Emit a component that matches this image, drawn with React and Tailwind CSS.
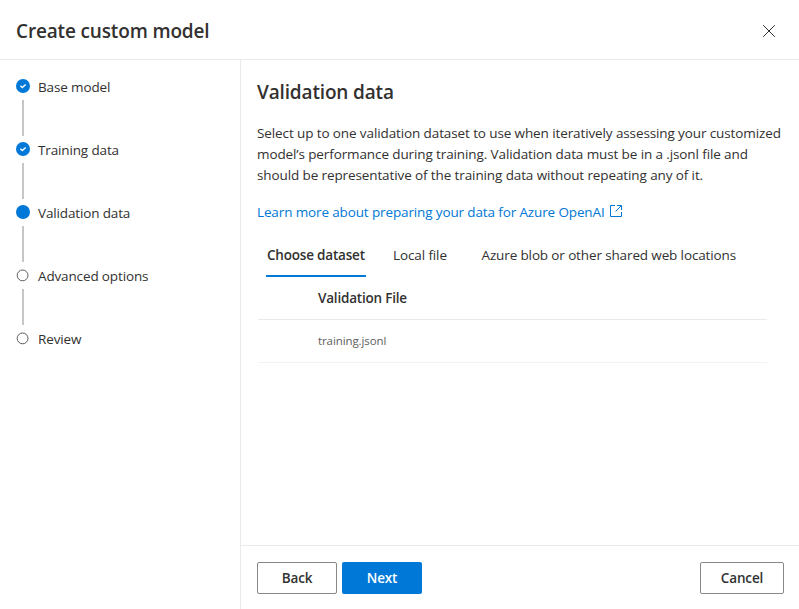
import React from "react";

const steps = [
  { label: "Base model", state: "done" },
  { label: "Training data", state: "done" },
  { label: "Validation data", state: "current" },
  { label: "Advanced options", state: "todo" },
  { label: "Review", state: "todo" },
];

function StepIcon({ state }) {
  if (state === "todo") {
    return (
      <svg className="h-[14px] w-[14px]" viewBox="0 0 14 14" fill="none">
        <circle cx="6.6" cy="7.4" r="5.4" stroke="#5c5b5a" strokeWidth="1" />
      </svg>
    );
  }
  return (
    <svg className="h-[14px] w-[14px]" viewBox="0 0 14 14" fill="none">
      <circle cx="7" cy="7" r="7" fill="#0078d7" />
      {state === "done" && (
        <path d="M4.4 6.8 6.3 8.6 9.7 5.4" stroke="#fff" strokeWidth="1.4" />
      )}
    </svg>
  );
}

function Step({ label, state, last }) {
  return (
    <li className="h-[63px]">
      <div className="flex h-[14px] items-center gap-2">
        <StepIcon state={state} />
        <span className="pt-px text-[13.5px] leading-[20px] tracking-[-0.14px] whitespace-nowrap">{label}</span>
      </div>
      {!last && <div className="mt-[7px] ml-[6px] h-9 w-0.5 bg-[#c8c6c4]" />}
    </li>
  );
}

export default function App() {
  return (
    <div className="flex h-[609px] w-[799px] flex-col overflow-hidden bg-white font-['Open_Sans','Noto_Sans',sans-serif] text-[#323130]">
      <header className="flex h-[60px] shrink-0 items-center justify-between border-b border-[#eaeaea] pr-6 pl-4">
        <h1 className="pt-0.5 text-[19px] leading-7 font-semibold tracking-[-0.15px]">Create custom model</h1>
        <button aria-label="Close" className="mt-[3px]">
          <svg className="h-3 w-3" viewBox="0 0 12 12" fill="none" stroke="#323130" strokeWidth="1">
            <path d="M.2.2l11.6 11.6M11.8.2.2 11.8" />
          </svg>
        </button>
      </header>
      <div className="flex min-h-0 flex-1">
        <ol className="w-[241px] shrink-0 border-r border-[#eaeaea] pt-[19px] pl-4">
          {steps.map((s, i) => (
            <Step key={s.label} label={s.label} state={s.state} last={i === steps.length - 1} />
          ))}
        </ol>
        <main className="flex min-w-0 flex-1 flex-col">
          <section className="flex-1 pt-[18px] pl-4">
            <h2 className="text-[19px] leading-7 font-semibold tracking-[-0.15px]">Validation data</h2>
            <p className="mt-[17px] text-[13.5px] leading-[21px] tracking-[-0.11px] whitespace-nowrap">
              Select up to one validation dataset to use when iteratively assessing your customized
              <br />
              model’s performance during training. Validation data must be in a .jsonl file and
              <br />
              should be representative of the training data without repeating any of it.
            </p>
            <a className="mt-4 flex h-[21px] items-center gap-[5px] text-[13.5px] tracking-[-0.13px] whitespace-nowrap text-[#0078d4]">
              <span>Learn more about preparing your data for Azure OpenAI</span>
              <svg className="mb-[3px] h-3 w-3" viewBox="0 0 12 12" fill="none" stroke="#0078d4">
                <path d="M5 .5H.5v11h11V7M7 .5h4.5V5M11.2.8 5.5 6.5" />
              </svg>
            </a>
            <nav className="mt-[10px] flex h-[44px] text-[13.5px] leading-[44px] whitespace-nowrap">
              <div className="ml-[9px] h-[44px] w-[100px] border-b-2 border-[#0078d4] pl-px leading-[44px] font-semibold tracking-[-0.2px]">Choose dataset</div>
              <div className="ml-[27px] w-[88.5px] tracking-[-0.11px]">Local file</div>
              <div className="tracking-[-0.13px]">Azure blob or other shared web locations</div>
            </nav>
            <div className="w-[510px] pl-px">
              <div className="h-[43px] border-b border-[#eaeaea] pl-[60px] text-[13.5px] leading-[42px] font-semibold tracking-[-0.2px]">Validation File</div>
              <div className="h-[43px] border-b border-[#f3f2f1] pl-[60px] text-[11.5px] leading-[42px] tracking-[-0.1px] text-[#605e5c]">training.jsonl</div>
            </div>
          </section>
          <footer className="flex h-[64px] shrink-0 gap-[5px] border-t border-[#eaeaea] pt-4 pr-[15px] pl-4 text-[13.5px] font-semibold tracking-[-0.15px]">
            <button className="h-8 w-20 rounded-[2px] border border-[#8a8886]">Back</button>
            <button className="h-8 w-20 rounded-[2px] bg-[#0078d7] text-white">Next</button>
            <button className="ml-auto h-8 w-[84px] rounded-[2px] border border-[#8a8886]">Cancel</button>
          </footer>
        </main>
      </div>
    </div>
  );
}
